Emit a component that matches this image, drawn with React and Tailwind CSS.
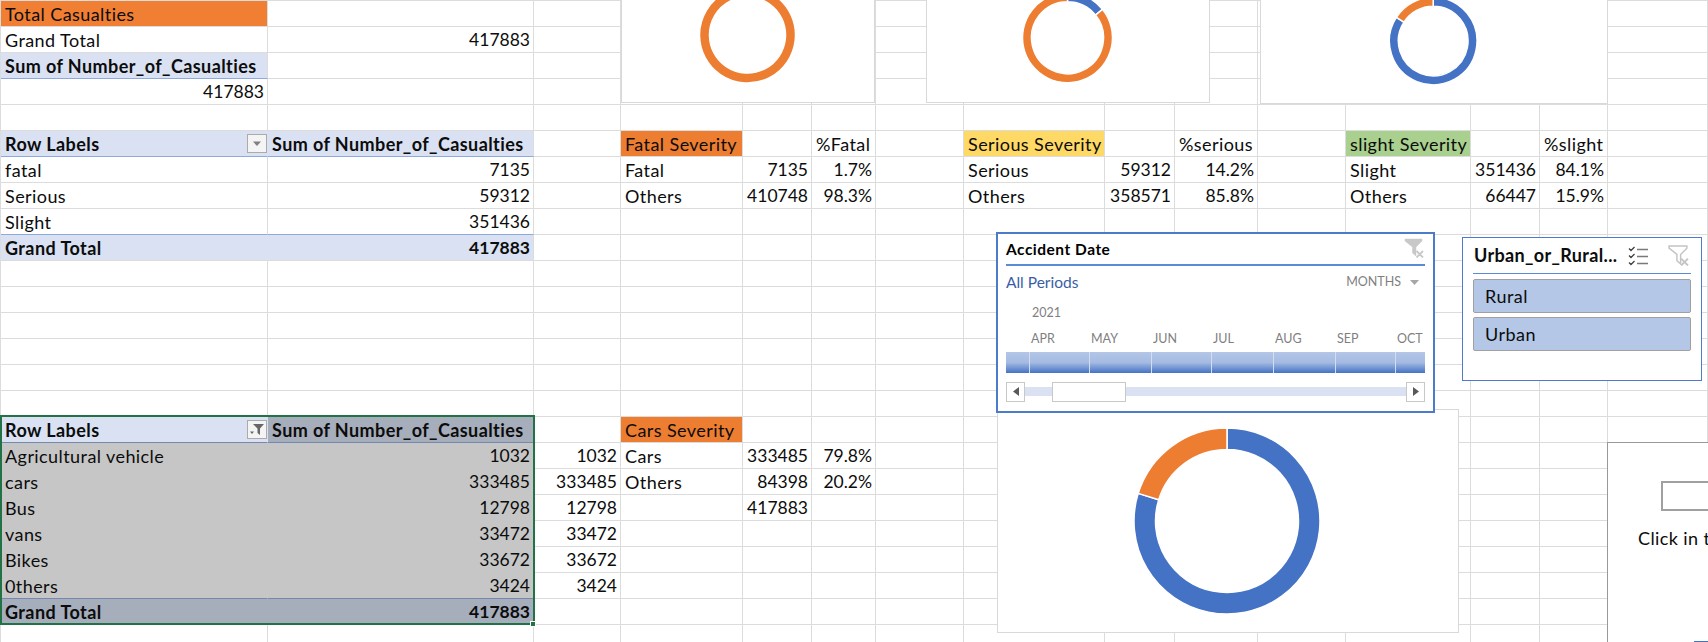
import React from "react";

const colEdges = [0, 268, 534, 621, 743, 812, 876, 964, 1105, 1175, 1258, 1346, 1471, 1540, 1608, 1708];

const BLUE = "#4472c4";
const ORANGE = "#ed7d31";

// cell key is "row-col", rows and columns both count from 0
const cells = {
  "0-0": { text: "Total Casualties", cls: "bg-[#f07f34]" },
  "1-0": { text: "Grand Total" },
  "1-1": { text: "417883", right: true },
  "2-0": { text: "Sum of Number_of_Casualties", cls: "bg-[#d9e1f2] font-bold border-b-[#8ea9db]" },
  "3-0": { text: "417883", right: true },

  "5-0": { text: "Row Labels", cls: "bg-[#d9e1f2] font-bold border-b-[#8ea9db] border-r-[#d9e1f2]", drop: "arrow" },
  "5-1": { text: "Sum of Number_of_Casualties", cls: "bg-[#d9e1f2] font-bold border-b-[#8ea9db]" },
  "6-0": { text: "fatal" },
  "6-1": { text: "7135", right: true },
  "7-0": { text: "Serious" },
  "7-1": { text: "59312", right: true },
  "8-0": { text: "Slight", cls: "border-b-[#8ea9db]" },
  "8-1": { text: "351436", right: true, cls: "border-b-[#8ea9db]" },
  "9-0": { text: "Grand Total", cls: "bg-[#d9e1f2] font-bold border-r-[#d9e1f2]" },
  "9-1": { text: "417883", right: true, cls: "bg-[#d9e1f2] font-bold" },

  "5-3": { text: "Fatal Severity", cls: "bg-[#ed7d31]" },
  "5-5": { text: "%Fatal" },
  "6-3": { text: "Fatal" },
  "6-4": { text: "7135", right: true },
  "6-5": { text: "1.7%", right: true },
  "7-3": { text: "Others" },
  "7-4": { text: "410748", right: true },
  "7-5": { text: "98.3%", right: true },

  "5-7": { text: "Serious Severity", cls: "bg-[#ffd966]" },
  "5-9": { text: "%serious" },
  "6-7": { text: "Serious" },
  "6-8": { text: "59312", right: true },
  "6-9": { text: "14.2%", right: true },
  "7-7": { text: "Others" },
  "7-8": { text: "358571", right: true },
  "7-9": { text: "85.8%", right: true },

  "5-11": { text: "slight Severity", cls: "bg-[#a9d08e]" },
  "5-13": { text: "%slight" },
  "6-11": { text: "Slight" },
  "6-12": { text: "351436", right: true },
  "6-13": { text: "84.1%", right: true },
  "7-11": { text: "Others" },
  "7-12": { text: "66447", right: true },
  "7-13": { text: "15.9%", right: true },

  "16-0": { text: "Row Labels", cls: "bg-[#d9e1f2] font-bold border-b-[#7488b0] border-r-[#d9e1f2]", drop: "filter" },
  "16-1": { text: "Sum of Number_of_Casualties", cls: "bg-[#a6adbb] font-bold border-b-[#7488b0] border-r-[#a6adbb]" },

  "16-3": { text: "Cars Severity", cls: "bg-[#ed7d31]" },
  "17-3": { text: "Cars" },
  "17-4": { text: "333485", right: true },
  "17-5": { text: "79.8%", right: true },
  "18-3": { text: "Others" },
  "18-4": { text: "84398", right: true },
  "18-5": { text: "20.2%", right: true },
  "19-4": { text: "417883", right: true },
};

const vehicles = [
  ["Agricultural vehicle", "1032"],
  ["cars", "333485"],
  ["Bus", "12798"],
  ["vans", "33472"],
  ["Bikes", "33672"],
  ["0thers", "3424"],
];

vehicles.forEach(([name, value], i) => {
  const last = i === vehicles.length - 1;
  const line = last ? "border-b-[#7488b0]" : "border-b-[#c6c6c6]";
  cells[`${17 + i}-0`] = { text: name, cls: `bg-[#c6c6c6] border-r-[#c6c6c6] ${line}` };
  cells[`${17 + i}-1`] = { text: value, right: true, cls: `bg-[#c6c6c6] border-r-[#c6c6c6] ${line}` };
  cells[`${17 + i}-2`] = { text: value, right: true };
});
cells["23-0"] = { text: "Grand Total", cls: "bg-[#a6adbb] font-bold border-r-[#a6adbb] border-b-white" };
cells["23-1"] = { text: "417883", right: true, cls: "bg-[#a6adbb] font-bold border-r-[#a6adbb] border-b-white" };

const DropArrow = ({ filter }) => (
  <span className="absolute right-0 top-[3px] flex h-[19px] w-[20px] items-center justify-center border border-[#ababab] bg-[#f4f4f4]">
    {filter ? (
      <svg width="15" height="13" viewBox="0 0 15 13">
        <path d="M3 1h11L10 5.500V12L7.500 10V5.500z" fill="#666" />
        <path d="M0 8.500h4L2 11z" fill="#666" />
      </svg>
    ) : (
      <svg width="10" height="6" viewBox="0 0 10 6">
        <path d="M1 0.5h8L5 5z" fill="#808080" />
      </svg>
    )}
  </span>
);

const Cell = ({ cell }) => (
  <div
    className={`relative flex h-[26px] items-center overflow-visible whitespace-nowrap border-r border-b border-[#dcdcdc] pt-[2px] pl-[4px] pr-[3px] text-[#0c0c0c] ${
      cell?.right ? "justify-end text-[17.5px]" : "text-[18px] tracking-[0.42px]"
    } ${cell?.cls || ""}`}
  >
    {cell?.text}
    {cell?.drop && <DropArrow filter={cell.drop === "filter"} />}
  </div>
);

// one slice of a ring, angles in degrees clockwise from 12 o'clock
const slicePath = (cx, cy, r, inner, from, to) => {
  const pt = (rad, a) => {
    const t = (a * Math.PI) / 180;
    return `${cx + rad * Math.sin(t)} ${cy - rad * Math.cos(t)}`;
  };
  const big = to - from > 180 ? 1 : 0;
  return `M${pt(r, from)}A${r} ${r} 0 ${big} 1 ${pt(r, to)}L${pt(inner, to)}A${inner} ${inner} 0 ${big} 0 ${pt(inner, from)}Z`;
};

const Donut = ({ width, height, cx, cy, r, inner, split, first, second, gap = 1.5 }) => (
  <svg width={width} height={height} className="block">
    <path d={slicePath(cx, cy, r, inner, 0, split)} fill={first} stroke="#fff" strokeWidth={gap} />
    <path d={slicePath(cx, cy, r, inner, split, 359.99)} fill={second} stroke="#fff" strokeWidth={gap} />
  </svg>
);

const ChartBox = ({ className, children }) => (
  <div className={`absolute overflow-hidden border border-[#d9d9d9] bg-white ${className}`}>{children}</div>
);

const FilterClear = ({ size = 20, color = "#c8c8c8", outline }) => (
  <svg width={size} height={size} viewBox="0 0 20 20" fill="none">
    <path
      d="M1 1h17v2L12 9V18L8.500 15V9L1 3z"
      fill={outline ? "#fff" : color}
      stroke={color}
      strokeWidth={outline ? 1.4 : 0.5}
    />
    <path d="M12.500 13l6.500 6.500M19 13l-6.500 6.500" stroke={color} strokeWidth="1.800" />
  </svg>
);

const months = [
  ["APR", 60],
  ["MAY", 62],
  ["JUN", 60],
  ["JUL", 62],
  ["AUG", 62],
  ["SEP", 60],
  ["OCT", 30],
];

const Timeline = () => (
  <div className="absolute left-[996px] top-[232px] flex h-[181px] w-[439px] flex-col border-2 border-[#4d7bcb] bg-white pl-[8px] pr-[8px] font-['Lato',sans-serif]">
    <div className="flex h-[32px] shrink-0 items-center justify-between border-b-2 border-[#5b8ad8] pt-[1px]">
      <span className="text-[15.5px] font-bold tracking-[0.5px] text-black">Accident Date</span>
      <span className="-mt-[4px] mr-[1px]">
        <FilterClear />
      </span>
    </div>
    <div className="mt-[7px] flex items-center justify-between">
      <span className="text-[15.5px] leading-[18px] text-[#3a5ea6]">All Periods</span>
      <span className="flex items-center gap-[9px] pr-[6px] text-[12.5px] text-[#7f7f7f]">
        MONTHS
        <svg width="9" height="5" viewBox="0 0 9 5">
          <path d="M0 0h9L4.500 5z" fill="#a6a6a6" />
        </svg>
      </span>
    </div>
    <div className="mt-[13px] pl-[26px] text-[12.5px] leading-[16px] text-[#7f7f7f]">2021</div>
    <div className="mt-[10px] flex pl-[25px] text-[12.5px] leading-[16px] text-[#7f7f7f]">
      {months.map(([m, w]) => (
        <span key={m} className="shrink-0" style={{ width: w }}>
          {m}
        </span>
      ))}
    </div>
    <div className="mt-[5px] flex h-[21px] bg-gradient-to-b from-[#b4c6e7] via-[#a5bbe2] to-[#4472c4] pl-[23px]">
      {months.map(([m, w]) => (
        <span key={m} className="h-full shrink-0 border-l border-[#d3ddf0]" style={{ width: w }} />
      ))}
    </div>
    <div className="mt-[9px] flex h-[20px] items-center">
      <span className="flex h-[20px] w-[19px] shrink-0 items-center justify-center border border-[#c8c8c8] bg-white">
        <svg width="6" height="9" viewBox="0 0 6 9">
          <path d="M6 0v9L0 4.500z" fill="#595959" />
        </svg>
      </span>
      <div className="flex h-[9px] flex-1 items-center bg-[#d9e1f2]">
        <span className="ml-[27px] h-[20px] w-[74px] border border-[#c8c8c8] bg-white" />
      </div>
      <span className="flex h-[20px] w-[19px] shrink-0 items-center justify-center border border-[#c8c8c8] bg-white">
        <svg width="6" height="9" viewBox="0 0 6 9">
          <path d="M0 0v9L6 4.500z" fill="#595959" />
        </svg>
      </span>
    </div>
  </div>
);

const SlicerItem = ({ label }) => (
  <div className="flex h-[34px] items-center rounded-[2px] border border-[#a0a0a0] bg-[#b4c7e7] pl-[11px] pt-[1px] text-[18px] tracking-[0.5px] text-[#0c0c0c]">
    {label}
  </div>
);

const Slicer = () => (
  <div className="absolute left-[1462px] top-[237px] flex h-[144px] w-[240px] flex-col border border-[#4d7bcb] bg-white px-[10px] font-['Lato',sans-serif]">
    <div className="flex h-[36px] shrink-0 items-center border-b border-[#5b8ad8] pl-[1px]">
      <span className="w-[154px] text-[18px] font-bold tracking-[0.35px] whitespace-nowrap text-[#0c0c0c]">Urban_or_Rural...</span>
      <svg width="21" height="20" viewBox="0 0 21 20" fill="none">
        <path d="M1 2.500l2 2 3.500-3.500M1 9.500l2 2 3.500-3.500M1 16.500l2 2 3.500-3.500" stroke="#404040" strokeWidth="1.300" />
        <path d="M9 3.500h11M9 10.500h11M9 17.500h11" stroke="#7a7a7a" strokeWidth="1.700" />
      </svg>
      <span className="ml-[19px]">
        <FilterClear size={21} color="#c4c4c4" outline />
      </span>
    </div>
    <div className="mt-[5px] flex flex-col gap-[4px]">
      <SlicerItem label="Rural" />
      <SlicerItem label="Urban" />
    </div>
  </div>
);

const rows = Array.from({ length: 25 }, (_, r) => r);

export default function App() {
  return (
    <div className="relative h-[642px] w-[1708px] overflow-hidden bg-white font-['Lato',sans-serif]">
      {/* sheet grid */}
      <div className="grid h-[642px] grid-cols-[267px_266px_87px_122px_69px_64px_88px_141px_70px_83px_88px_125px_69px_68px_100px] border-l border-t border-[#dcdcdc] content-start">
        {rows.map((r) => colEdges.slice(0, -1).map((_, c) => <Cell key={`${r}-${c}`} cell={cells[`${r}-${c}`]} />))}
      </div>

      {/* selection box round the second pivot */}
      <div className="pointer-events-none absolute left-0 top-[415px] h-[210px] w-[535px] border-2 border-[#217346]" />
      <div className="absolute left-[530px] top-[621px] h-[6px] w-[6px] border border-white bg-[#217346]" />

      {/* charts */}
      <ChartBox className="left-[621px] -top-[2px] h-[105px] w-[254px]">
        <Donut width={254} height={105} cx={125.500} cy={36} r={48} inner={38} split={6} first={BLUE} second={ORANGE} />
      </ChartBox>
      <ChartBox className="left-[926px] -top-[2px] h-[105px] w-[284px]">
        <Donut width={284} height={105} cx={140.500} cy={38.700} r={45} inner={36} split={51} first={BLUE} second={ORANGE} />
      </ChartBox>
      <ChartBox className="left-[1260px] -top-[2px] h-[106px] w-[348px]">
        <Donut width={348} height={106} cx={172.200} cy={42} r={43.800} inner={34.800} split={302.800} first={BLUE} second={ORANGE} />
      </ChartBox>
      <ChartBox className="left-[997px] top-[409px] h-[224px] w-[462px]">
        <Donut width={460} height={222} cx={229} cy={111} r={93} inner={71.500} split={287.300} first={BLUE} second={ORANGE} />
      </ChartBox>

      <Timeline />
      <Slicer />

      {/* box at the right edge, runs off the page */}
      <div className="absolute left-[1607px] top-[442px] h-[210px] w-[110px] border border-[#999] bg-white">
        <div className="ml-[53px] mt-[38px] h-[30px] w-[60px] border-2 border-[#a0a0a0]" />
        <div className="ml-[30px] mt-[14px] text-[18px] tracking-[0.4px] whitespace-nowrap text-[#0c0c0c]">Click in t</div>
        <div className="absolute left-[86px] top-[198px] h-[1px] w-[20px] bg-[#4472c4]" />
      </div>
    </div>
  );
}
